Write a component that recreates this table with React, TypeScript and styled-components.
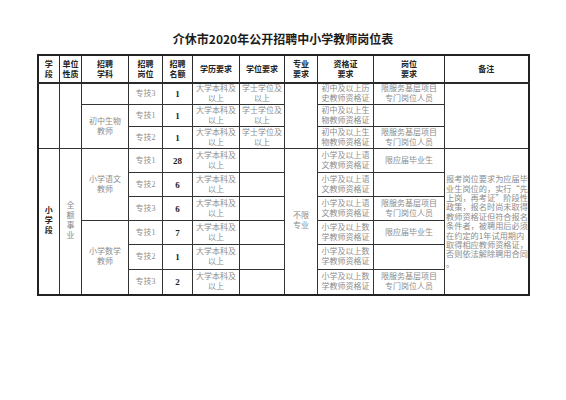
import styled, { createGlobalStyle } from 'styled-components'

const GlobalStyle = createGlobalStyle`
  html, body {
    margin: 0;
    padding: 0;
    background: #fff;
  }
`

const Page = styled.div`
  width: 566px;
  height: 400px;
  box-sizing: border-box;
  padding-top: 31px;
  display: flex;
  flex-direction: column;
  align-items: center;
  background: #fff;
`

const Title = styled.h1`
  margin: 0 0 8px;
  font: 700 12px/15px "Noto Sans CJK SC", sans-serif;
  color: #1c1c1c;
`

const Table = styled.table`
  width: 491px;
  table-layout: fixed;
  border-collapse: collapse;
  border: 2px solid #222;
`

const Row = styled.tr<{ $h: number }>`
  height: ${p => p.$h}px;
`

const HeadCell = styled.th`
  border: 1px solid #2a2a2a;
  border-bottom-width: 2px;
  padding: 0;
  text-align: center;
  vertical-align: middle;
  font: 700 8px/10px "Noto Sans CJK SC", sans-serif;
  color: #222;
  white-space: pre-line;
`

const Cell = styled.td<{ $strong?: boolean }>`
  border: 1px solid #333;
  padding: 0 1px;
  text-align: center;
  vertical-align: middle;
  font-family: "Liberation Serif", "Noto Sans CJK SC", serif;
  font-size: 8px;
  line-height: 10px;
  font-weight: ${p => (p.$strong ? 700 : 400)};
  color: ${p => (p.$strong ? '#1e1e1e' : '#8c8c8c')};
  white-space: pre-line;
`

const NumCell = styled(Cell)`
  font-size: 9px;
  font-weight: 700;
  color: #1e1e1e;
`

const NoteCell = styled(Cell)`
  text-align: left;
  padding: 0 0 0 1px;
  font-family: "Noto Sans CJK SC", sans-serif;
  font-size: 8.2px;
  line-height: 9.4px;
  white-space: pre;
`

// one character per line, for the narrow merged cells
const Stack = styled.div`
  display: flex;
  flex-direction: column;
  align-items: center;
  line-height: 10px;
`

const headers = [
  '学\n段', '单位\n性质', '招聘\n学科', '招聘\n岗位', '招聘\n名额', '学历要求',
  '学位要求', '专业\n要求', '资格证\n要求', '岗位\n要求', '备注',
]
const cols = [22, 22, 47, 34, 30, 47, 45, 33, 56, 71, 84]

const DEGREE = '大学本科及\n以上'
const BACHELOR = '学士学位及\n以上'
const BASE = '限服务基层项目\n专门岗位人员'
const FRESH = '限应届毕业生'

const note = [
  '报考岗位要求为应届毕',
  '业生岗位的，实行“先',
  '上岗，再考证”阶段性',
  '政策，报名时尚未取得',
  '教师资格证但符合报名',
  '条件者，被聘用后必须',
  '在约定的1年试用期内',
  '取得相应教师资格证，',
  '否则依法解除聘用合同',
  '。',
].join('\n')

const primary = [
  { subject: '小学语文\n教师', post: '专技1', num: '28', cert: '小学及以上语\n文教师资格证', job: FRESH, h: 24 },
  { post: '专技2', num: '6', cert: '小学及以上语\n文教师资格证', job: '', h: 24 },
  { post: '专技3', num: '6', cert: '小学及以上语\n文教师资格证', job: BASE, h: 24 },
  { subject: '小学数学\n教师', post: '专技1', num: '7', cert: '小学及以上数\n学教师资格证', job: FRESH, h: 24 },
  { post: '专技2', num: '1', cert: '小学及以上数\n学教师资格证', job: '', h: 25 },
  { post: '专技3', num: '2', cert: '小学及以上数\n学教师资格证', job: BASE, h: 25 },
]

const stack = (text: string) => (
  <Stack>{[...text].map((c, i) => <span key={i}>{c}</span>)}</Stack>
)

export default function App() {
  return (
    <>
      <GlobalStyle />
      <Page>
        <Title>介休市2020年公开招聘中小学教师岗位表</Title>
        <Table>
          <colgroup>
            {cols.map((w, i) => <col key={i} style={{ width: w }} />)}
          </colgroup>
          <thead>
            <Row $h={28}>
              {headers.map(h => <HeadCell key={h}>{h}</HeadCell>)}
            </Row>
          </thead>
          <tbody>
            <Row $h={21}>
              <Cell rowSpan={3} />
              <Cell rowSpan={3} />
              <Cell />
              <Cell>专技3</Cell>
              <NumCell>1</NumCell>
              <Cell>{DEGREE}</Cell>
              <Cell>{BACHELOR}</Cell>
              <Cell rowSpan={3} />
              <Cell>{'初中及以上历\n史教师资格证'}</Cell>
              <Cell>{BASE}</Cell>
              <Cell rowSpan={3} />
            </Row>
            <Row $h={22}>
              <Cell rowSpan={2}>{'初中生物\n教师'}</Cell>
              <Cell>专技1</Cell>
              <NumCell>1</NumCell>
              <Cell>{DEGREE}</Cell>
              <Cell>{BACHELOR}</Cell>
              <Cell>{'初中及以上生\n物教师资格证'}</Cell>
              <Cell />
            </Row>
            <Row $h={22}>
              <Cell>专技2</Cell>
              <NumCell>1</NumCell>
              <Cell>{DEGREE}</Cell>
              <Cell>{BACHELOR}</Cell>
              <Cell>{'初中及以上生\n物教师资格证'}</Cell>
              <Cell>{BASE}</Cell>
            </Row>
            {primary.map((r, i) => (
              <Row $h={r.h} key={i}>
                {i === 0 && (
                  <>
                    <Cell rowSpan={6} $strong>{stack('小学段')}</Cell>
                    <Cell rowSpan={6}>{stack('全额事业')}</Cell>
                  </>
                )}
                {r.subject && <Cell rowSpan={3}>{r.subject}</Cell>}
                <Cell>{r.post}</Cell>
                <NumCell>{r.num}</NumCell>
                <Cell>{DEGREE}</Cell>
                <Cell />
                {i === 0 && <Cell rowSpan={6}>{'不限\n专业'}</Cell>}
                <Cell>{r.cert}</Cell>
                <Cell>{r.job}</Cell>
                {i === 0 && <NoteCell rowSpan={6}>{note}</NoteCell>}
              </Row>
            ))}
          </tbody>
        </Table>
      </Page>
    </>
  )
}
